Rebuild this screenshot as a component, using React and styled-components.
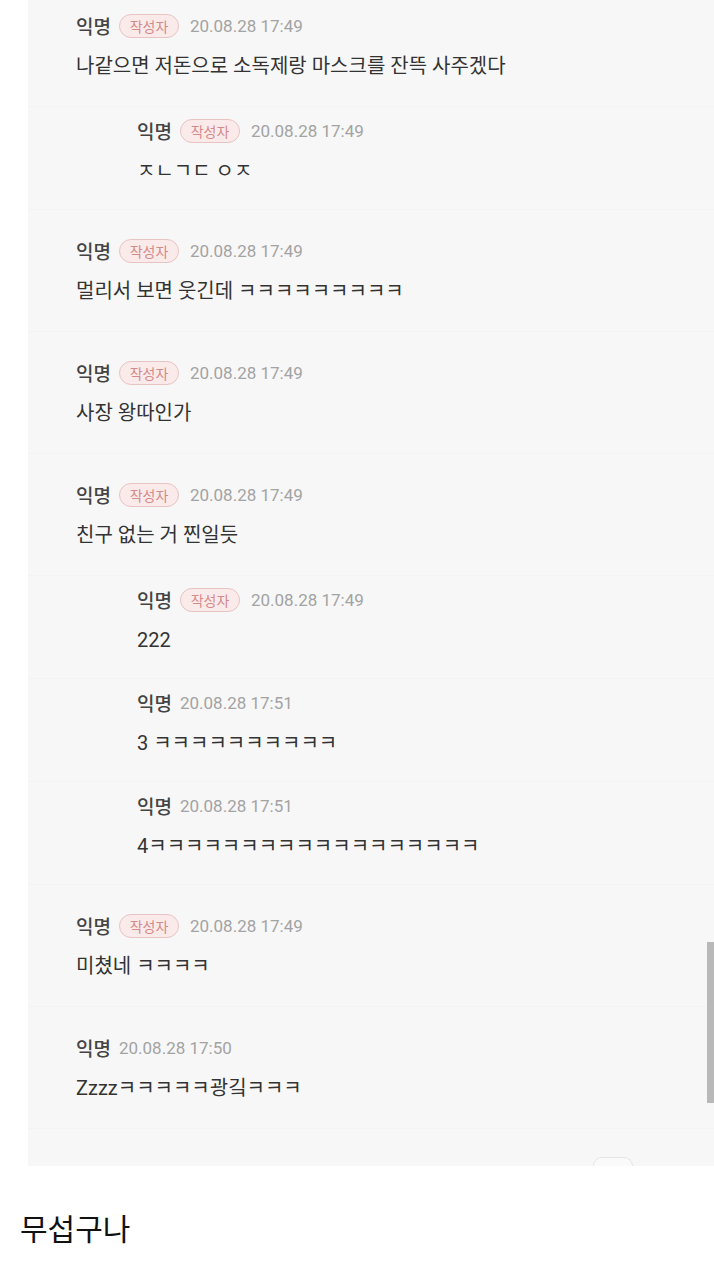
import React from "react";
import styled, { createGlobalStyle } from "styled-components";

const Global = createGlobalStyle`
  html, body { margin: 0; padding: 0; background: #ffffff; }
  body { font-family: Roboto, "Noto Sans CJK KR", sans-serif; }
  * { box-sizing: border-box; }
`;

const Page = styled.div`
  width: 714px;
  display: flex;
  flex-direction: column;
`;

const Panel = styled.section`
  position: relative;
  margin-left: 28px;
  background: #f7f7f7;
  overflow: hidden;
  display: flex;
  flex-direction: column;
`;

const List = styled.div`
  margin-top: -15px;
  display: flex;
  flex-direction: column;
`;

const Row = styled.div`
  display: flex;
  flex-direction: column;
  gap: 16px;
  padding: ${(p) => (p.$reply ? "12px 0 27px 109px" : "29px 0 29px 48px")};
  box-shadow: inset 0 -1px 0 #f3f3f3;
`;

const Header = styled.div`
  display: flex;
  align-items: center;
  height: 24px;
  gap: 8px;
`;

const Name = styled.span`
  font-family: "Noto Sans CJK KR", sans-serif;
  font-size: 19px;
  font-weight: 500;
  color: #444444;
  line-height: 24px;
`;

const Badge = styled.span`
  display: inline-flex;
  align-items: center;
  justify-content: center;
  height: 24px;
  width: 60px;
  margin-right: 3px;
  border: 1px solid #e8c3c3;
  background: #fbeaea;
  border-radius: 12px;
  font-family: "Noto Sans CJK KR", sans-serif;
  font-size: 14px;
  color: #d38a8a;
`;

const DateText = styled.span`
  font-family: Roboto, sans-serif;
  font-size: 17px;
  color: #a3a3a3;
  line-height: 24px;
`;

const Body = styled.div`
  font-family: Roboto, "Noto Sans CJK KR", sans-serif;
  font-size: 20px;
  color: #333333;
  line-height: 24px;
  white-space: nowrap;
`;

const Footer = styled.div`
  display: flex;
  justify-content: flex-end;
  padding-right: 81px;
  margin-top: 28px;
`;

const Tab = styled.div`
  width: 40px;
  height: 9px;
  border: 1px solid #e4e4e4;
  border-bottom: none;
  border-radius: 9px 9px 0 0;
  background: #fafafa;
`;

const ScrollThumb = styled.div`
  position: absolute;
  right: 0;
  top: 942px;
  width: 7px;
  height: 161px;
  background: #b9b9b9;
`;

const Caption = styled.p`
  margin: 41px 0 0 20px;
  font-family: "Noto Sans CJK KR", sans-serif;
  font-size: 30px;
  line-height: 40px;
  color: #111111;
`;

const comments = [
  { author: true, date: "20.08.28 17:49", text: "나같으면 저돈으로 소독제랑 마스크를 잔뜩 사주겠다" },
  { reply: true, author: true, date: "20.08.28 17:49", text: "ㅈㄴㄱㄷ ㅇㅈ" },
  { author: true, date: "20.08.28 17:49", text: "멀리서 보면 웃긴데 ㅋㅋㅋㅋㅋㅋㅋㅋㅋ" },
  { author: true, date: "20.08.28 17:49", text: "사장 왕따인가" },
  { author: true, date: "20.08.28 17:49", text: "친구 없는 거 찐일듯" },
  { reply: true, author: true, date: "20.08.28 17:49", text: "222" },
  { reply: true, date: "20.08.28 17:51", text: "3 ㅋㅋㅋㅋㅋㅋㅋㅋㅋㅋ" },
  { reply: true, date: "20.08.28 17:51", text: "4ㅋㅋㅋㅋㅋㅋㅋㅋㅋㅋㅋㅋㅋㅋㅋㅋㅋㅋ" },
  { author: true, date: "20.08.28 17:49", text: "미쳤네 ㅋㅋㅋㅋ" },
  { date: "20.08.28 17:50", text: "Zzzzㅋㅋㅋㅋㅋ광깈ㅋㅋㅋ" },
];

export default function App() {
  return (
    <>
      <Global />
      <Page>
        <Panel>
          <List>
            {comments.map((c, i) => (
              <Row key={i} $reply={c.reply}>
                <Header>
                  <Name>익명</Name>
                  {c.author && <Badge>작성자</Badge>}
                  <DateText>{c.date}</DateText>
                </Header>
                <Body>{c.text}</Body>
              </Row>
            ))}
          </List>
          <Footer>
            <Tab />
          </Footer>
          <ScrollThumb />
        </Panel>
        <Caption>무섭구나</Caption>
      </Page>
    </>
  );
}
